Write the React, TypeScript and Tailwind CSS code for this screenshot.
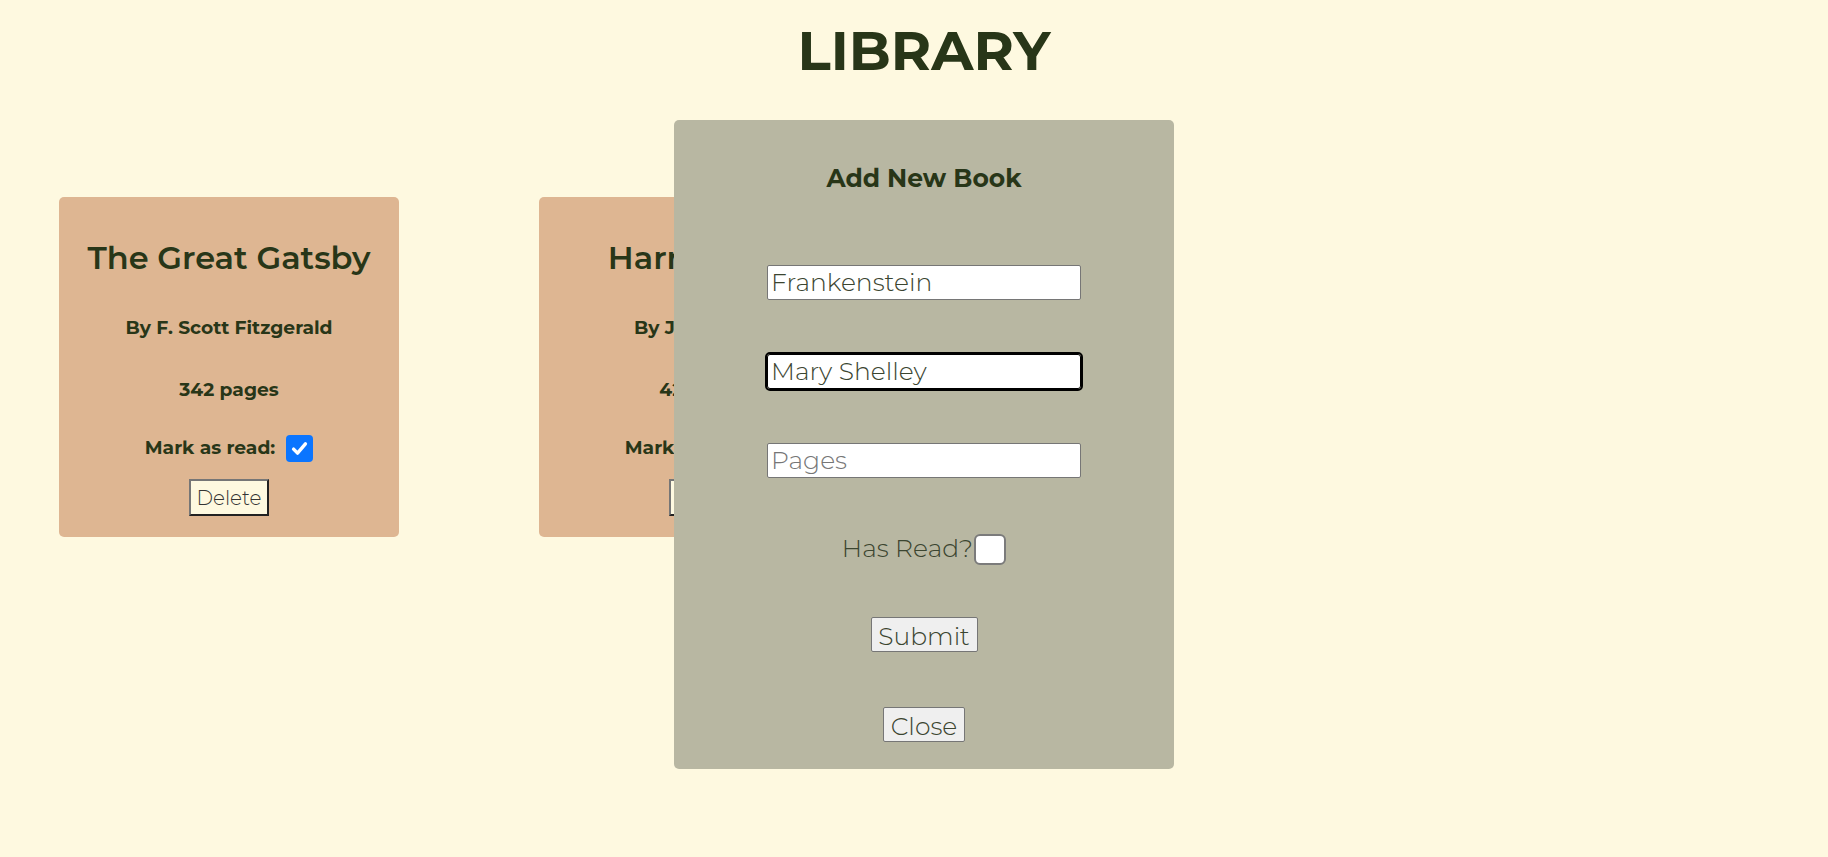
import { useState } from "react";

type Book = { title: string; author: string; pages: number; read: boolean };

const books: Book[] = [
  { title: "The Great Gatsby", author: "F. Scott Fitzgerald", pages: 342, read: true },
  { title: "Harry Potter", author: "J.K. Rowling", pages: 423, read: true },
];

const FONT = "font-['Montserrat','Inter','Open_Sans',sans-serif]";

function ReadBox({ checked }: { checked: boolean }) {
  return checked ? (
    <span className="flex h-[27px] w-[27px] items-center justify-center rounded-[4px] bg-[#0b75ff]">
      <svg viewBox="0 0 16 16" className="h-[21px] w-[21px]" fill="none" stroke="#fff" strokeWidth={2.6} strokeLinecap="round" strokeLinejoin="round">
        <path d="M3.5 8.5l3 3 6-7" />
      </svg>
    </span>
  ) : (
    <span className="h-[27px] w-[27px] rounded-[4px] border-2 border-[#767676] bg-white" />
  );
}

function BookCard({ book }: { book: Book }) {
  return (
    <div className="flex h-[340px] w-[340px] shrink-0 flex-col items-center rounded-[5px] bg-[#deb692] pt-[40px] text-[#283618]">
      <h2 className="text-[32px] font-semibold leading-[42px]">{book.title}</h2>
      <p className="mt-[38px] text-[18.7px] font-bold leading-[22px]">By {book.author}</p>
      <p className="mt-[40px] text-[18.7px] font-bold leading-[22px]">{book.pages} pages</p>
      <div className="mt-[33px] flex h-[28px] items-center gap-[11px]">
        <span className="text-[18.7px] font-bold">Mark as read:</span>
        <ReadBox checked={book.read} />
      </div>
      <button className="mt-[17px] h-[37px] w-[80px] border-2 border-t-[#767676] border-l-[#767676] border-r-[#222] border-b-[#222] bg-[#fef9e0] text-[20px] font-light text-[#333]">
        Delete
      </button>
    </div>
  );
}

export default function App() {
  const [title, setTitle] = useState("Frankenstein");
  const [author, setAuthor] = useState("Mary Shelley");
  const [pages, setPages] = useState("");

  return (
    <div className={`relative min-h-screen bg-[#fef9e0] ${FONT}`}>
      <h1 className="pl-[20px] pt-[16px] text-center text-[55px] font-bold leading-[70px] text-[#283618]">LIBRARY</h1>

      <div className="mt-[111px] flex gap-[140px] pl-[59px]">
        {books.map((b) => (
          <BookCard key={b.title} book={b} />
        ))}
      </div>

      {/* add book dialog */}
      <div className="absolute left-[674px] top-[120px] flex h-[649px] w-[500px] flex-col items-center rounded-[5px] bg-[#b8b7a2] pt-[44px] text-[#283618]">
        <h3 className="text-[25px] font-bold leading-[28px]">Add New Book</h3>
        <input
          value={title}
          onChange={(e) => setTitle(e.target.value)}
          placeholder="Title"
          className="mt-[73px] h-[35px] w-[314px] rounded-[2px] border border-[#767676] bg-white px-[3px] text-[25px] font-light text-[#3b4530] outline-none placeholder:text-[#767676]"
        />
        <input
          value={author}
          onChange={(e) => setAuthor(e.target.value)}
          placeholder="Author"
          className="mt-[54px] h-[35px] w-[314px] rounded-[3px] border border-black bg-white px-[3px] text-[25px] font-light text-[#3b4530] outline-2 outline-black outline-offset-0"
        />
        <input
          value={pages}
          onChange={(e) => setPages(e.target.value)}
          placeholder="Pages"
          className="mt-[54px] h-[35px] w-[314px] rounded-[2px] border border-[#767676] bg-white px-[3px] text-[25px] font-light text-[#3b4530] outline-none placeholder:text-[#767676]"
        />
        <div className="mt-[55px] flex h-[32px] items-center">
          <span className="text-[25px] font-light text-[#3b4530]">Has Read?</span>
          <span className="ml-[1px] h-[31px] w-[32px] rounded-[6px] border-2 border-[#7b7b7b] bg-white" />
        </div>
        <button className="mt-[52px] h-[35px] w-[107px] rounded-[2px] border border-[#767676] bg-[#efefef] text-[25px] font-light text-[#3b4530]">
          Submit
        </button>
        <button className="mt-[55px] h-[35px] w-[82px] rounded-[2px] border border-[#767676] bg-[#efefef] text-[25px] font-light text-[#3b4530]">
          Close
        </button>
      </div>
    </div>
  );
}
